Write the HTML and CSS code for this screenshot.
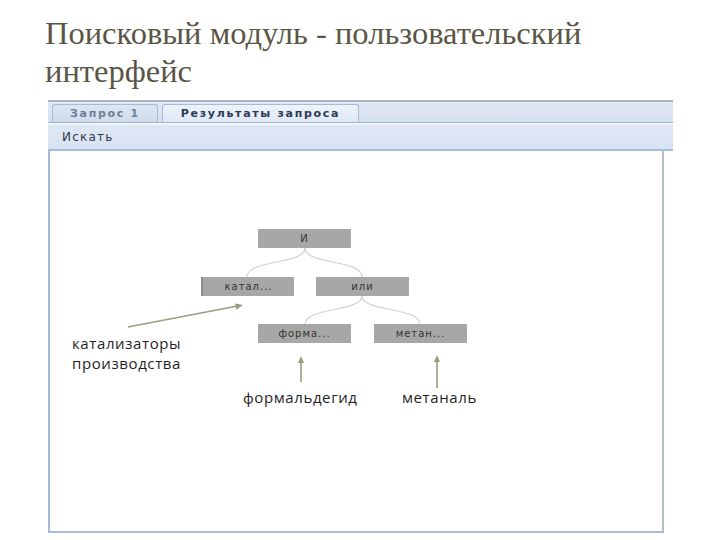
FILE: index.html
```html
<!DOCTYPE html>
<html lang="ru">
<head>
<meta charset="utf-8">
<title>Поисковый модуль</title>
<link rel="stylesheet" href="styles.css">
</head>
<body>
<h1 class="title">Поисковый модуль - пользовательский интерфейс</h1>
<div class="panel">
  <div class="tabstrip">
    <div class="tab">Запрос 1</div>
    <div class="tab tab-active">Результаты запроса</div>
  </div>
  <div class="toolbar"><span class="tool">Искать</span></div>
  <div class="content">
    <div class="diagram">
      <svg class="links" width="614" height="378" viewBox="0 0 614 378">
        <g class="conn">
          <path d="M255,97 C255,114 197,108 197,126"/>
          <path d="M255,97 C255,114 312,108 312,126"/>
          <path d="M312,145 C312,161 255,156 255,173"/>
          <path d="M312,145 C312,161 370,156 370,173"/>
        </g>
        <g class="arrow">
          <line x1="78" y1="176" x2="190" y2="154.5"/>
          <path class="head" d="M193,154 L185,152.5 L186.3,158.8 Z"/>
          <line x1="251" y1="231" x2="251" y2="209"/>
          <path class="head" d="M251,205 L248,212 L254,212 Z"/>
          <line x1="387" y1="237" x2="387" y2="208"/>
          <path class="head" d="M387,204 L384,211 L390,211 Z"/>
        </g>
      </svg>
      <div class="node n-and">И</div>
      <div class="node n-cat">катал...</div>
      <div class="node n-or">или</div>
      <div class="node n-form">форма...</div>
      <div class="node n-met">метан...</div>
      <div class="label l-cat">катализаторы<br>производства</div>
      <div class="label l-form">формальдегид</div>
      <div class="label l-met">метаналь</div>
    </div>
  </div>
</div>
</body>
</html>
```

FILE: styles.css
```css
html, body {
  margin: 0;
  padding: 0;
  background: #ffffff;
}

.title {
  margin: 0;
  padding: 14px 0 0 45px;
  width: 600px;
  font-family: "Liberation Serif", "DejaVu Serif", serif;
  font-weight: normal;
  font-size: 32.5px;
  line-height: 38px;
  color: #5a5646;
}

.panel {
  margin: 10px 0 0 48px;
  width: 625px;
}

.tabstrip {
  height: 20px;
  border-top: 2px solid #aab3c0;
  border-bottom: 1px solid #9fb6d4;
  background: linear-gradient(#dfe8f5, #d6e1f1);
  display: flex;
  align-items: flex-end;
  gap: 4px;
  padding-left: 4px;
}

.tab {
  height: 18px;
  box-sizing: border-box;
  border: 1px solid #a9bbd3;
  border-bottom: none;
  border-radius: 3px 3px 0 0;
  background: linear-gradient(#dde6f3, #cfdbec);
  font-family: "DejaVu Sans", Verdana, sans-serif;
  font-weight: bold;
  font-size: 11px;
  letter-spacing: 1.7px;
  line-height: 17px;
  color: #6d7f98;
  width: 106px;
  text-align: center;
}

.tab-active {
  width: 197px;
  background: linear-gradient(#eef3fa, #dfe8f5);
  color: #2a3a55;
}

.toolbar {
  height: 24px;
  border-top: 2px solid #f2f6fb;
  border-bottom: 2px solid #a6bcda;
  background: linear-gradient(#dde7f4, #d8e3f2);
  padding-left: 14px;
  display: flex;
  align-items: center;
}

.tool {
  font-family: "DejaVu Sans", Verdana, sans-serif;
  font-size: 12px;
  letter-spacing: 1.2px;
  color: #333b48;
}

.content {
  width: 616px;
  height: 382px;
  box-sizing: border-box;
  border-left: 2px solid #a4badb;
  border-right: 2px solid #b2bfd0;
  border-bottom: 2px solid #a9bcd6;
  background: #ffffff;
}

.diagram {
  position: relative;
  width: 100%;
  height: 100%;
}

.links {
  position: absolute;
  left: 0;
  top: 0;
}

.conn path {
  fill: none;
  stroke: #d4d4cc;
  stroke-width: 1.2;
}

.arrow line {
  stroke: #9c9c80;
  stroke-width: 1.6;
}

.arrow .head {
  fill: #9c9c80;
}

.node {
  position: absolute;
  width: 93px;
  height: 19px;
  background: #a7a7a7;
  font-family: "DejaVu Sans", Verdana, sans-serif;
  font-size: 10px;
  letter-spacing: 1px;
  line-height: 19px;
  color: #333333;
  text-align: center;
}

.n-and  { left: 208px; top: 78px; }
.n-cat  { left: 151px; top: 126px; border-left: 2px solid #8e8e8e; width: 91px; }
.n-or   { left: 266px; top: 126px; }
.n-form { left: 208px; top: 173px; }
.n-met  { left: 324px; top: 173px; }

.label {
  position: absolute;
  font-family: "Open Sans", "Noto Sans", sans-serif;
  font-size: 15px;
  letter-spacing: 0.6px;
  line-height: 20px;
  color: #1f1f1f;
  white-space: nowrap;
}

.l-cat  { left: 22px; top: 182px; }
.l-form { left: 193px; top: 236px; }
.l-met  { left: 352px; top: 236px; }
```
